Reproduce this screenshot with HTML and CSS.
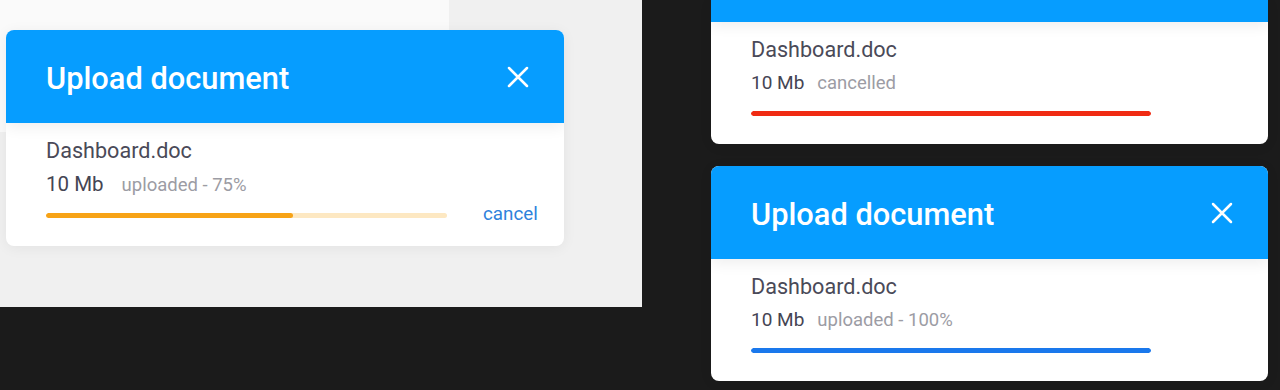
FILE: index.html
```html
<!DOCTYPE html>
<html lang="en">
<head>
<meta charset="utf-8">
<title>Upload document</title>
<link rel="stylesheet" href="styles.css">
</head>
<body>
<div class="stage">
  <section class="panel">
    <div class="card">
      <header class="card-head">
        <h2 class="card-title">Upload document</h2>
        <svg class="close" viewBox="0 0 22 22" aria-hidden="true"><path d="M2 2L20 20M20 2L2 20"/></svg>
      </header>
      <div class="card-body">
        <div class="file-name">Dashboard.doc</div>
        <div class="meta meta-lg"><span class="size">10 Mb</span><span class="status">uploaded - 75%</span></div>
        <div class="bar-row">
          <div class="bar bar-wide bar-orange"><div class="fill" style="width:61.5%"></div></div>
          <a class="cancel" href="#">cancel</a>
        </div>
      </div>
    </div>
  </section>
  <section class="column">
    <div class="card">
      <header class="card-head card-head-clipped"></header>
      <div class="card-body">
        <div class="file-name">Dashboard.doc</div>
        <div class="meta"><span class="size">10 Mb</span><span class="status">cancelled</span></div>
        <div class="bar-row">
          <div class="bar bar-red"><div class="fill" style="width:100%"></div></div>
        </div>
      </div>
    </div>
    <div class="card">
      <header class="card-head">
        <h2 class="card-title">Upload document</h2>
        <svg class="close" viewBox="0 0 22 22" aria-hidden="true"><path d="M2 2L20 20M20 2L2 20"/></svg>
      </header>
      <div class="card-body">
        <div class="file-name">Dashboard.doc</div>
        <div class="meta"><span class="size">10 Mb</span><span class="status">uploaded - 100%</span></div>
        <div class="bar-row">
          <div class="bar bar-blue"><div class="fill" style="width:100%"></div></div>
        </div>
      </div>
    </div>
  </section>
</div>
</body>
</html>
```
FILE: styles.css
```css
* { box-sizing: border-box; }
html, body { margin: 0; padding: 0; }
body {
  background: #1b1b1b;
  font-family: Roboto, "Liberation Sans", Arial, sans-serif;
  width: 1280px;
  height: 390px;
  overflow: hidden;
}
.stage {
  display: flex;
  align-items: flex-start;
}
.panel {
  width: 642px;
  height: 307px;
  flex: none;
  padding: 30px 0 0 6px;
  background: linear-gradient(#fafafa, #fafafa) 0 0 / 449px 132px no-repeat, #f0f0f0;
}
.column {
  flex: none;
  width: 557px;
  margin-left: 69px;
  display: flex;
  flex-direction: column;
  gap: 22px;
}
.panel .card { width: 558px; }
.card {
  background: #fff;
  border-radius: 8px;
  overflow: hidden;
  box-shadow: 0 2px 14px rgba(0, 0, 0, 0.06);
}
.card-head {
  position: relative;
  z-index: 1;
  height: 93px;
  background: #069dff;
  display: flex;
  align-items: center;
  justify-content: space-between;
  padding: 0 35px 0 40px;
  box-shadow: 0 4px 14px rgba(0, 0, 0, 0.07);
}
.card-head-clipped {
  height: 22px;
}
.column .card:first-child {
  border-top-left-radius: 0;
  border-top-right-radius: 0;
}
.card-title {
  margin: 3px 0 0;
  color: #fff;
  font-size: 30.8px;
  font-weight: 500;
  letter-spacing: 0;
}
.close {
  width: 22px;
  height: 22px;
  fill: none;
  stroke: #fff;
  stroke-width: 2.5;
  stroke-linecap: round;
}
.card-body {
  padding: 16px 40px 21px;
}
.file-name {
  line-height: 24px;
  font-size: 21.6px;
  color: #4a4a58;
}
.meta {
  margin-top: 9px;
  line-height: 24px;
  display: flex;
  align-items: baseline;
  gap: 13px;
}
.size {
  font-size: 19px;
  color: #454553;
}
.meta-lg { gap: 18px; }
.meta-lg .size { font-size: 20.5px; }
.status {
  font-size: 18.5px;
  color: #9c9ca4;
}
.bar-row {
  margin-top: 8px;
  height: 20px;
  display: flex;
  align-items: center;
}
.bar {
  flex: none;
  width: 400px;
  height: 5px;
  border-radius: 3px;
  overflow: hidden;
}
.bar-wide { width: 401px; }
.fill {
  height: 100%;
  border-radius: 3px;
}
.bar-orange { background: #fde8c2; }
.bar-orange .fill { background: #f7a316; }
.bar-red .fill { background: #f02b13; }
.bar-blue .fill { background: #1a78ec; }
.cancel {
  margin-left: 36px;
  margin-top: -3px;
  font-size: 18.8px;
  color: #2e82dc;
  text-decoration: none;
}
```
